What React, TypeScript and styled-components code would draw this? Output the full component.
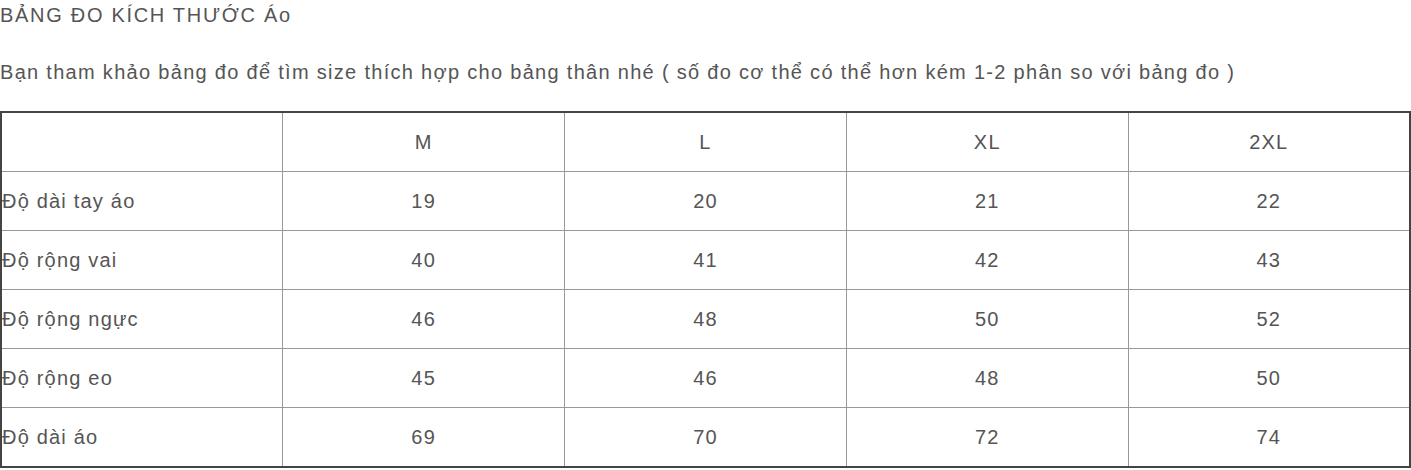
import React from 'react';
import styled, { createGlobalStyle } from 'styled-components';

const GlobalStyle = createGlobalStyle`
  html, body {
    margin: 0;
    padding: 0;
    background: #fff;
  }
  body {
    font-family: "Liberation Sans", Arial, sans-serif;
    color: #555;
  }
`;

const Page = styled.div`
  width: 1411px;
  padding-top: 3px;
`;

const Title = styled.div`
  font-size: 20px;
  line-height: 24px;
  letter-spacing: 1.7px;
  white-space: nowrap;
  margin-bottom: 33px;
`;

const Intro = styled.p`
  font-size: 20px;
  line-height: 24px;
  letter-spacing: 1.3px;
  white-space: nowrap;
  margin: 0 0 27px 0;
`;

const Table = styled.table`
  width: 1411px;
  border-collapse: collapse;
  border: 2px solid #444;
  table-layout: fixed;
`;

const Cell = styled.td<{ label?: boolean }>`
  border: 1px solid #999;
  height: 58px;
  padding: 0;
  font-size: 20px;
  letter-spacing: 1.2px;
  white-space: nowrap;
  text-align: ${props => (props.label ? 'left' : 'center')};
  vertical-align: middle;
`;

const sizes = ['M', 'L', 'XL', '2XL'];

const rows: { label: string; values: number[] }[] = [
  { label: 'Độ dài tay áo', values: [19, 20, 21, 22] },
  { label: 'Độ rộng vai', values: [40, 41, 42, 43] },
  { label: 'Độ rộng ngực', values: [46, 48, 50, 52] },
  { label: 'Độ rộng eo', values: [45, 46, 48, 50] },
  { label: 'Độ dài áo', values: [69, 70, 72, 74] },
];

export default function App() {
  return (
    <Page>
      <GlobalStyle />
      <Title>BẢNG ĐO KÍCH THƯỚC Áo</Title>
      <Intro>
        Bạn tham khảo bảng đo để tìm size thích hợp cho bảng thân nhé ( số đo cơ thể có thể hơn kém 1-2 phân so với bảng đo )
      </Intro>
      <Table>
        <tbody>
          <tr>
            <Cell label />
            {sizes.map(s => (
              <Cell key={s}>{s}</Cell>
            ))}
          </tr>
          {rows.map(r => (
            <tr key={r.label}>
              <Cell label>{r.label}</Cell>
              {r.values.map((v, i) => (
                <Cell key={i}>{v}</Cell>
              ))}
            </tr>
          ))}
        </tbody>
      </Table>
    </Page>
  );
}
